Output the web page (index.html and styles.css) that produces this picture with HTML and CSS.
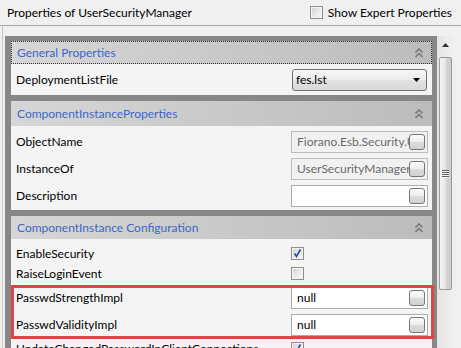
FILE: index.html
```html
<!DOCTYPE html>
<html>
<head>
<meta charset="utf-8">
<link rel="stylesheet" href="styles.css">
</head>
<body>
<div class="top">
  <span class="title">Properties of UserSecurityManager</span>
  <label class="expert"><span class="cb"></span><span>Show Expert Properties</span></label>
</div>
<div class="panel">
  <div class="frame">
    <div class="grid">
      <section class="group">
        <div class="ghead focus">
          <span>General Properties</span>
          <svg class="chev" width="8" height="10" viewBox="0 0 8 10"><polyline points="0.5,4.5 4,1 7.5,4.5" /><polyline points="0.5,9 4,5.5 7.5,9" /></svg>
        </div>
        <div class="row h31">
          <span class="label">DeploymentListFile</span>
          <div class="combo"><span>fes.lst</span><svg width="7" height="4" viewBox="0 0 7 4"><polygon points="0,0 7,0 3.5,4" fill="#000"/></svg></div>
        </div>
      </section>
      <section class="group">
        <div class="ghead h25">
          <span>ComponentInstanceProperties</span>
          <svg class="chev" width="8" height="10" viewBox="0 0 8 10"><polyline points="0.5,4.5 4,1 7.5,4.5" /><polyline points="0.5,9 4,5.5 7.5,9" /></svg>
        </div>
        <div class="body b2">
          <div class="row h27">
            <span class="label">ObjectName</span>
            <div class="tb ro"><span class="txt">Fiorano.Esb.Security.UserSecurityManager</span><span class="dots"></span></div>
          </div>
          <div class="row h27">
            <span class="label">InstanceOf</span>
            <div class="tb ro"><span class="txt">UserSecurityManager</span><span class="dots"></span></div>
          </div>
          <div class="row h27">
            <span class="label">Description</span>
            <div class="tb"><span class="txt"></span><span class="dots"></span></div>
          </div>
        </div>
      </section>
      <section class="group">
        <div class="ghead">
          <span>ComponentInstance Configuration</span>
          <svg class="chev" width="8" height="10" viewBox="0 0 8 10"><polyline points="0.5,4.5 4,1 7.5,4.5" /><polyline points="0.5,9 4,5.5 7.5,9" /></svg>
        </div>
        <div class="body b4">
          <div class="row h20">
            <span class="label">EnableSecurity</span>
            <span class="cb checked"><svg width="11" height="11" viewBox="0 0 11 11"><path d="M2.5 5.5 L4.5 8.5 L8.5 1.5" fill="none" stroke="#2a4a9a" stroke-width="1.6"/></svg></span>
          </div>
          <div class="row h20">
            <span class="label">RaiseLoginEvent</span>
            <span class="cb"></span>
          </div>
          <div class="row h27 first-tb">
            <span class="label">PasswdStrengthImpl</span>
            <div class="tb"><span class="txt dark">null</span><span class="dots"></span></div>
          </div>
          <div class="row h27">
            <span class="label">PasswdValidityImpl</span>
            <div class="tb"><span class="txt dark">null</span><span class="dots"></span></div>
          </div>
          <div class="row h20">
            <span class="label">UpdateChangedPasswordInClientConnections</span>
            <span class="cb checked"><svg width="11" height="11" viewBox="0 0 11 11"><path d="M2.5 5.5 L4.5 8.5 L8.5 1.5" fill="none" stroke="#2a4a9a" stroke-width="1.6"/></svg></span>
          </div>
        </div>
      </section>
    </div>
    <div class="vscroll">
      <div class="sb-up"><svg width="7" height="4" viewBox="0 0 7 4"><polygon points="0,4 7,4 3.5,0" fill="#333"/></svg></div>
      <div class="thumb"><span class="grip"></span></div>
    </div>
  </div>
</div>
<div class="annot"></div>
</body>
</html>
```
FILE: styles.css
```css
html, body {
  margin: 0;
  padding: 0;
}
body {
  width: 461px;
  height: 348px;
  overflow: hidden;
  position: relative;
  background: #f0f0f0;
  font-family: Lato, "Liberation Sans", sans-serif;
  font-size: 12px;
  color: #000;
}
.top {
  height: 25px;
  display: flex;
  align-items: center;
  justify-content: space-between;
  padding: 0 9px 0 7px;
  border-bottom: 1px solid #a9a9a9;
}
.expert {
  display: flex;
  align-items: center;
  gap: 5px;
}
.cb {
  width: 13px;
  height: 13px;
  box-sizing: border-box;
  border: 1px solid #8e8f8f;
  background: linear-gradient(135deg, #cfd1d4 0%, #eceded 60%, #f8f8f8 100%);
  box-shadow: inset 0 0 0 1px #f4f4f4;
  display: flex;
  align-items: center;
  justify-content: center;
}
.cb.checked svg {
  display: block;
}
.panel {
  margin-left: 2px;
  border-left: 1px solid #c6c6c6;
  padding: 10px 0 0 2px;
}
.frame {
  display: flex;
}
.grid {
  width: 421px;
  height: 312px;
  padding: 5px 5px 0 6px;
  background: #878787;
  display: flex;
  flex-direction: column;
  gap: 6px;
  overflow: hidden;
}
.group {
  background: #f4f4f4;
  flex-shrink: 0;
}
.ghead {
  height: 23px;
  box-sizing: border-box;
  display: flex;
  align-items: center;
  justify-content: space-between;
  padding: 0 9px 0 6px;
  background: linear-gradient(to right, #d6d6d6, #bcbcbc);
  color: #3b67c6;
}
.ghead.h25 {
  height: 25px;
}
.ghead.focus {
  outline: 1px dotted #333;
  outline-offset: -1px;
}
.chev {
  display: block;
}
.chev polyline {
  fill: none;
  stroke: #7b7b7b;
  stroke-width: 1.6;
}
.body.b2 {
  padding: 2px 0 1px;
}
.body.b4 {
  padding: 4px 0 0;
}
.row {
  display: grid;
  grid-template-columns: 275px 137px;
  align-items: center;
  padding-left: 5px;
}
.row.h31 { height: 31px; }
.row.h27 { height: 27px; }
.row.h20 { height: 20px; }
.row.first-tb { margin-top: 1px; }
.label {
  white-space: nowrap;
}
.combo {
  margin-left: 1px;
  width: 135px;
  height: 22px;
  box-sizing: border-box;
  border: 1px solid #707070;
  border-radius: 3px;
  background: linear-gradient(#f6f6f6, #ececec 50%, #e2e2e2 50%, #d9d9d9);
  display: flex;
  align-items: center;
  justify-content: space-between;
  padding: 0 6px 0 3px;
}
.combo svg { display: block; }
.tb {
  height: 22px;
  box-sizing: border-box;
  border: 1px solid #ababab;
  background: #fff;
  display: flex;
  align-items: center;
  padding: 0 2px 0 5px;
}
.tb.ro {
  background: #f1f1f1;
  border-color: #bcbcbc;
  color: #6a6a6a;
}
.txt {
  flex: 1;
  min-width: 0;
  overflow: hidden;
  white-space: nowrap;
}
.txt.dark { color: #000; }
.dots {
  width: 16px;
  height: 16px;
  box-sizing: border-box;
  border: 1px solid #767676;
  border-radius: 3px;
  background: linear-gradient(#fbfbfb, #ececec 50%, #dcdcdc 51%, #d2d2d2);
  flex-shrink: 0;
}
.vscroll {
  width: 17px;
  height: 312px;
  background: linear-gradient(to right, #e4e4e4, #f0f0f0);
  display: flex;
  flex-direction: column;
  align-items: flex-start;
}
.sb-up {
  width: 17px;
  height: 17px;
  display: flex;
  align-items: center;
  justify-content: center;
}
.sb-up svg { display: block; }
.thumb {
  margin: 4px 0 0 2px;
  width: 13px;
  height: 233px;
  box-sizing: border-box;
  border: 1px solid #9a9a9a;
  border-radius: 2px;
  background: linear-gradient(to right, #f4f4f4, #e6e6e6 50%, #d4d4d4 51%, #cdcdcd);
  display: flex;
  align-items: center;
  justify-content: center;
}
.grip {
  width: 7px;
  height: 8px;
  background: repeating-linear-gradient(#5f5f5f 0 1px, #f6f6f6 1px 2px);
}
.annot {
  position: absolute;
  left: 11px;
  top: 285px;
  width: 423px;
  height: 54px;
  box-sizing: border-box;
  border: 3px solid #e04545;
}
```
